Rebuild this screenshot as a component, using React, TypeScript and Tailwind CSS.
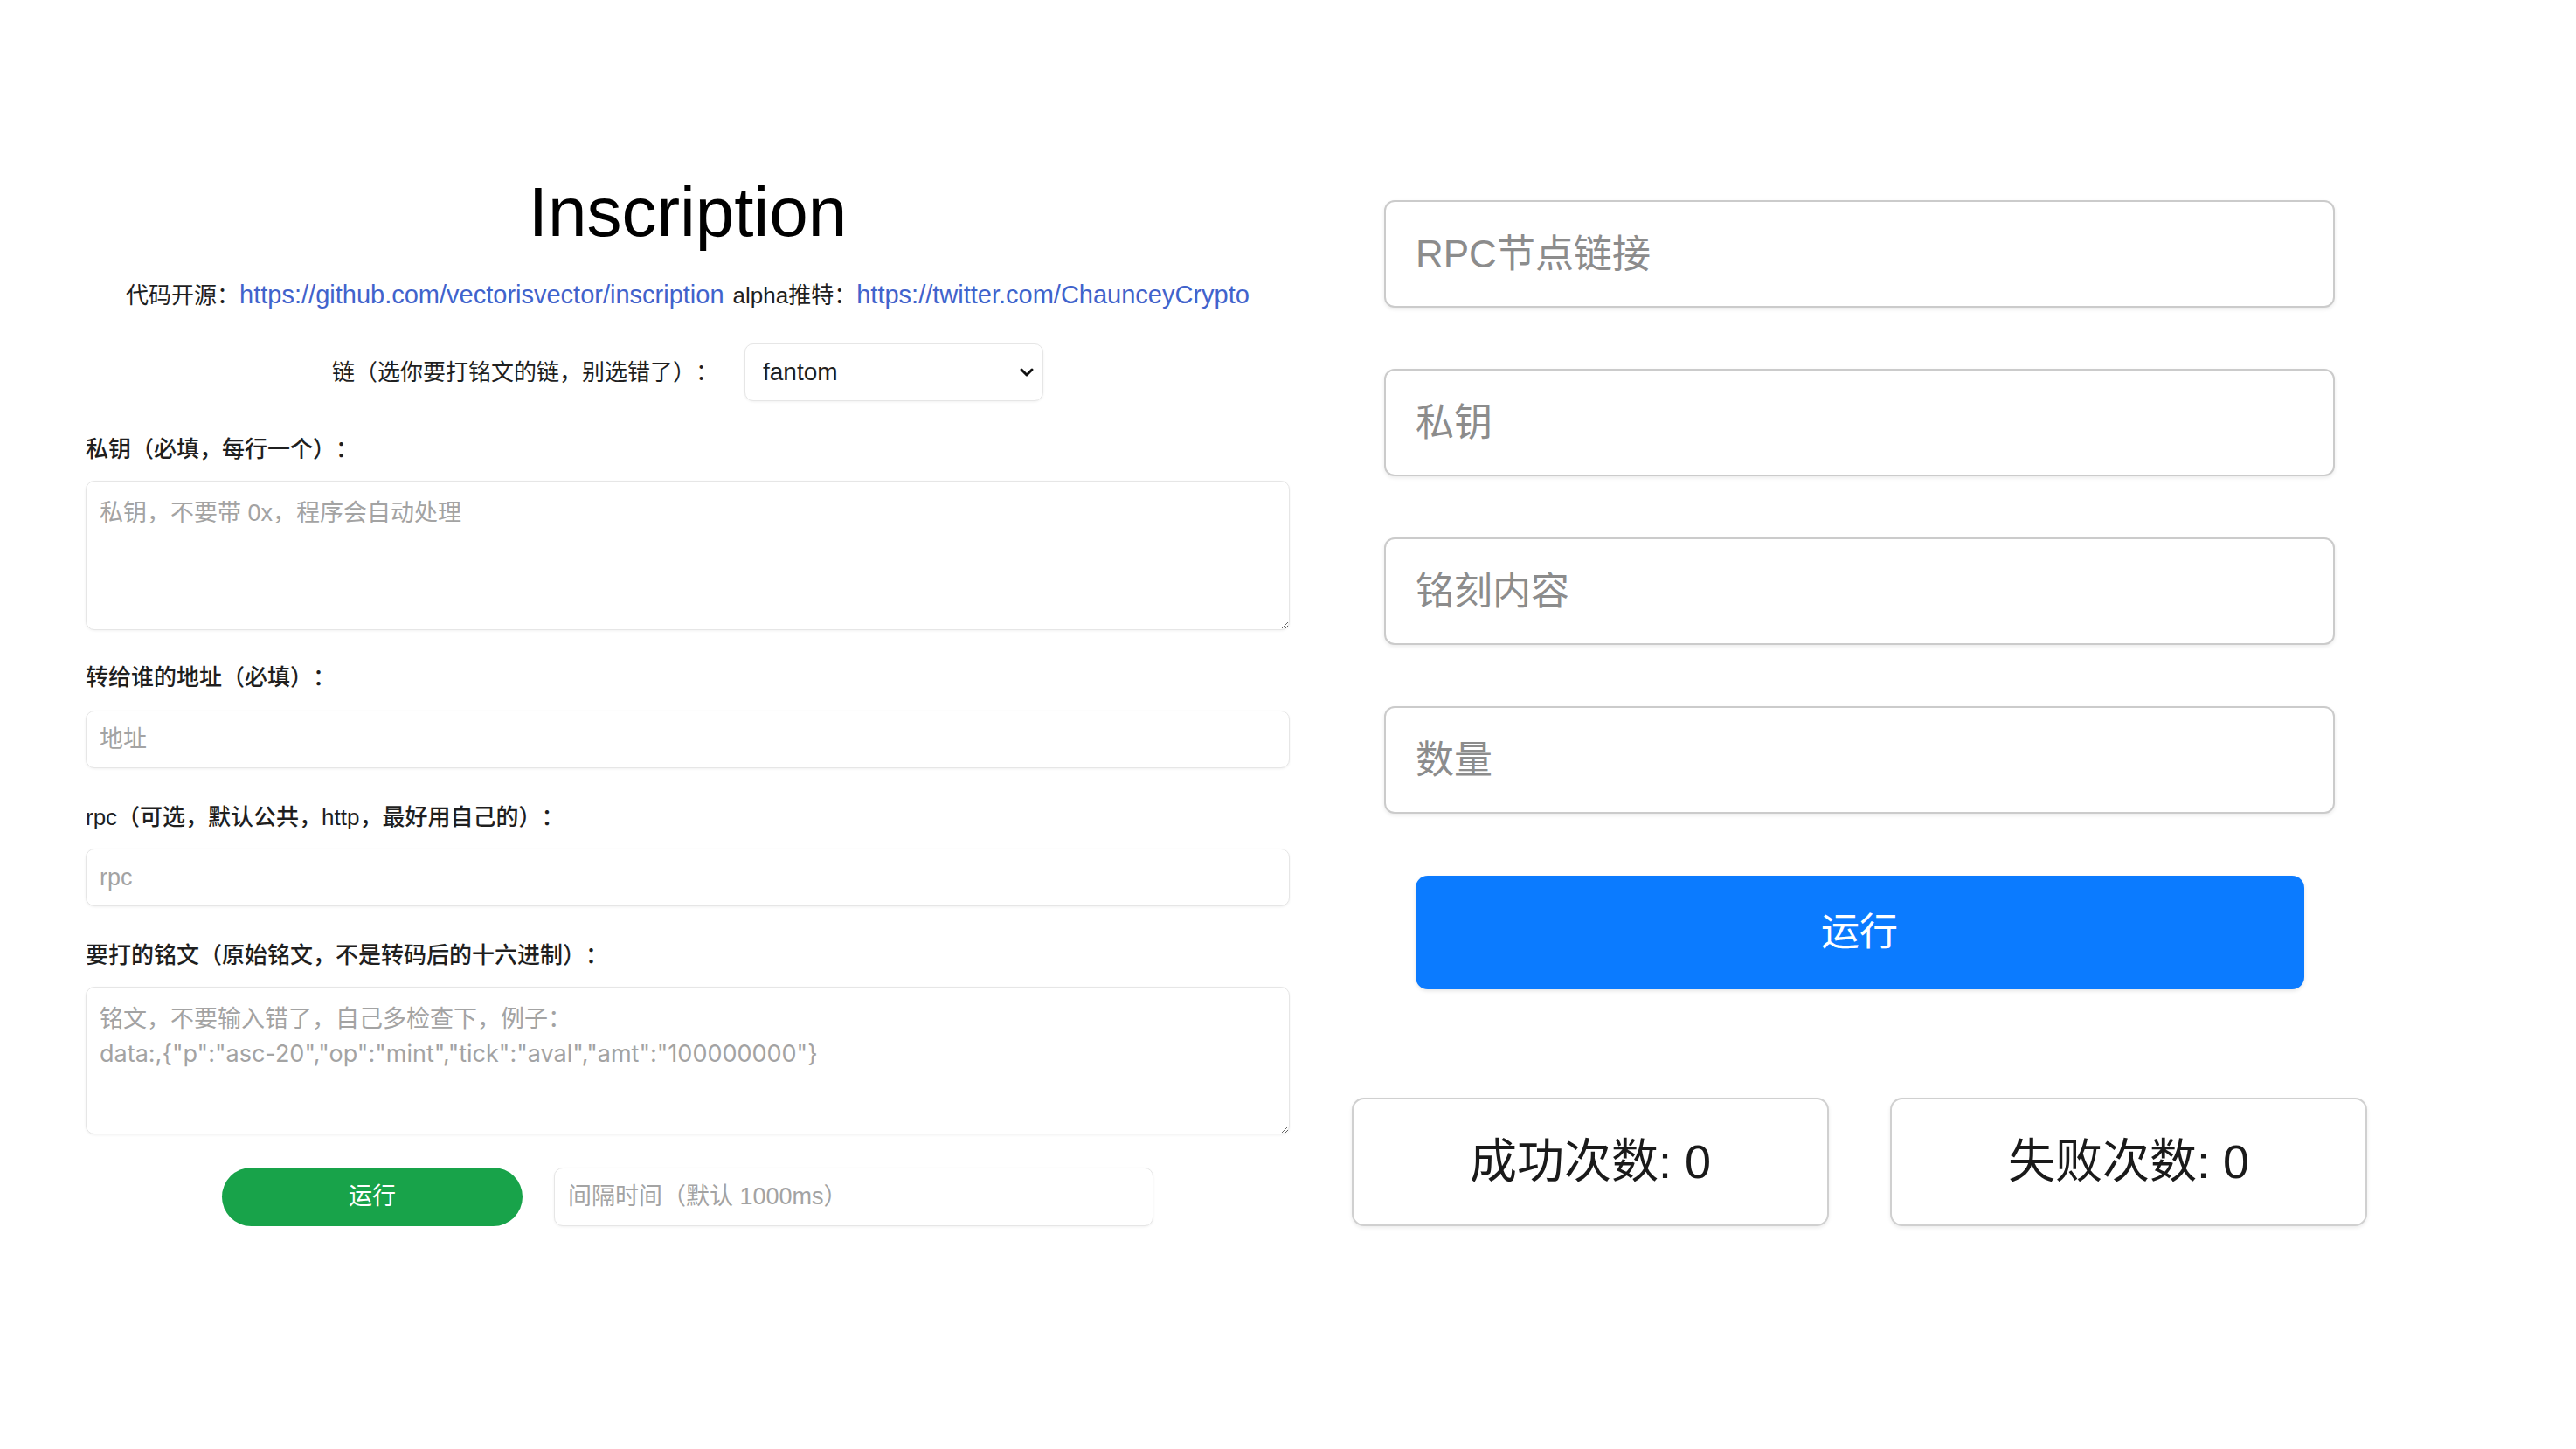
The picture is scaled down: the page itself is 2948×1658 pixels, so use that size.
import { useState } from "react"

const font = { fontFamily: '"Liberation Sans", "Noto Sans CJK SC", sans-serif' }
const interFont = { fontFamily: 'Inter, "Noto Sans CJK SC", sans-serif' }

function Label({ text, className = "" }: { text: string; className?: string }) {
  return (
    <div className={`h-[40px] leading-[40px] text-[26px] font-medium text-[#1f1f1f] ${className}`}>
      {text}
    </div>
  )
}

const leftInput =
  "w-full rounded-[10px] border border-[#e6e6e6] bg-white px-[15px] text-[27px] text-[#222] shadow-[0_1px_3px_rgba(0,0,0,0.06)] outline-none placeholder:text-[#a3a3a3]"

const rightInput =
  "w-[1088px] h-[123px] rounded-[12px] border-2 border-[#cbcbcb] bg-white px-[34px] text-[44px] text-[#222] shadow-[0_2px_4px_rgba(0,0,0,0.08)] outline-none placeholder:text-[#8c8c8c]"

export default function App() {
  const [chain, setChain] = useState("fantom")
  const [ok] = useState(0)
  const [fail] = useState(0)

  return (
    <div
      className="flex w-[2948px] h-[1658px] bg-white overflow-hidden [text-spacing-trim:space-all]"
      style={font}
    >
      {/* left: original form */}
      <div className="flex flex-col ml-[98px] w-[1378px] pt-[203px]">
        <h1 className="h-[80px] leading-none text-center text-[80px] font-normal text-black">Inscription</h1>

        <div className="mt-[35px] h-[40px] flex items-center justify-center text-[26px] text-[#1f1f1f] whitespace-nowrap">
          <span>代码开源：</span>
          <a className="text-[29px] text-[#4163cc]" href="#">https://github.com/vectorisvector/inscription</a>
          <span className="ml-[10px]">alpha推特：</span>
          <a className="text-[29px] text-[#4163cc]" href="#">https://twitter.com/ChaunceyCrypto</a>
        </div>

        <div className="mt-[35px] h-[66px] flex items-center justify-center gap-[30px]">
          <span className="text-[26px] text-[#1f1f1f]">链（选你要打铭文的链，别选错了）：</span>
          <div className="relative w-[342px] h-[66px]">
            <select
              value={chain}
              onChange={(e) => setChain(e.target.value)}
              className="appearance-none w-full h-full rounded-[10px] border border-[#e6e6e6] bg-white pl-[20px] text-[28px] text-[#1f1f1f] shadow-[0_1px_3px_rgba(0,0,0,0.06)] outline-none"
            >
              <option value="fantom">fantom</option>
              <option value="avalanche">avalanche</option>
              <option value="bsc">bsc</option>
              <option value="polygon">polygon</option>
            </select>
            <svg
              className="pointer-events-none absolute right-[10px] top-1/2 -translate-y-1/2"
              width="18"
              height="12"
              viewBox="0 0 18 12"
              fill="none"
            >
              <path d="M3 3l6 6 6-6" stroke="#111" strokeWidth="3" strokeLinecap="round" strokeLinejoin="round" />
            </svg>
          </div>
        </div>

        <Label text="私钥（必填，每行一个）：" className="mt-[35px]" />
        <textarea
          className={`${leftInput} mt-[16px] h-[171px] py-[16px] leading-[40px]`}
          placeholder="私钥，不要带 0x，程序会自动处理"
        />

        <Label text="转给谁的地址（必填）：" className="mt-[34px]" />
        <input className={`${leftInput} mt-[18px] h-[66px]`} placeholder="地址" />

        <Label text="rpc（可选，默认公共，http，最好用自己的）：" className="mt-[36px]" />
        <input className={`${leftInput} mt-[16px] h-[66px]`} placeholder="rpc" />

        <Label text="要打的铭文（原始铭文，不是转码后的十六进制）：" className="mt-[36px]" />
        <textarea
          style={interFont}
          className={`${leftInput} mt-[16px] h-[169px] py-[16px] leading-[40px]`}
          placeholder={'铭文，不要输入错了，自己多检查下，例子：\ndata:,{"p":"asc-20","op":"mint","tick":"aval","amt":"100000000"}'}
        />

        <div className="mt-[38px] flex justify-center gap-[36px]">
          <button className="w-[344px] h-[67px] rounded-full bg-[#18a34a] text-[27px] text-white">运行</button>
          <input className={`${leftInput} !w-[686px] h-[67px]`} placeholder="间隔时间（默认 1000ms）" />
        </div>
      </div>

      {/* right: simple panel */}
      <div className="flex flex-col items-center ml-[71px] w-[1162px] pt-[229px]">
        <input className={rightInput} placeholder="RPC节点链接" />
        <input className={`${rightInput} mt-[70px]`} placeholder="私钥" />
        <input className={`${rightInput} mt-[70px]`} placeholder="铭刻内容" />
        <input className={`${rightInput} mt-[70px]`} placeholder="数量" />

        <button className="mt-[71px] w-[1017px] h-[130px] rounded-[14px] bg-[#0b7bff] text-[44px] text-white shadow-[0_2px_4px_rgba(0,0,0,0.1)]">
          运行
        </button>

        <div className="mt-[124px] flex w-full justify-between">
          <div className="w-[546px] h-[147px] flex items-center justify-center rounded-[14px] border-2 border-[#d0d0d0] bg-white text-[54px] text-[#1a1a1a] shadow-[0_2px_4px_rgba(0,0,0,0.08)]">
            成功次数: {ok}
          </div>
          <div className="w-[546px] h-[147px] flex items-center justify-center rounded-[14px] border-2 border-[#d0d0d0] bg-white text-[54px] text-[#1a1a1a] shadow-[0_2px_4px_rgba(0,0,0,0.08)]">
            失败次数: {fail}
          </div>
        </div>
      </div>
    </div>
  )
}
